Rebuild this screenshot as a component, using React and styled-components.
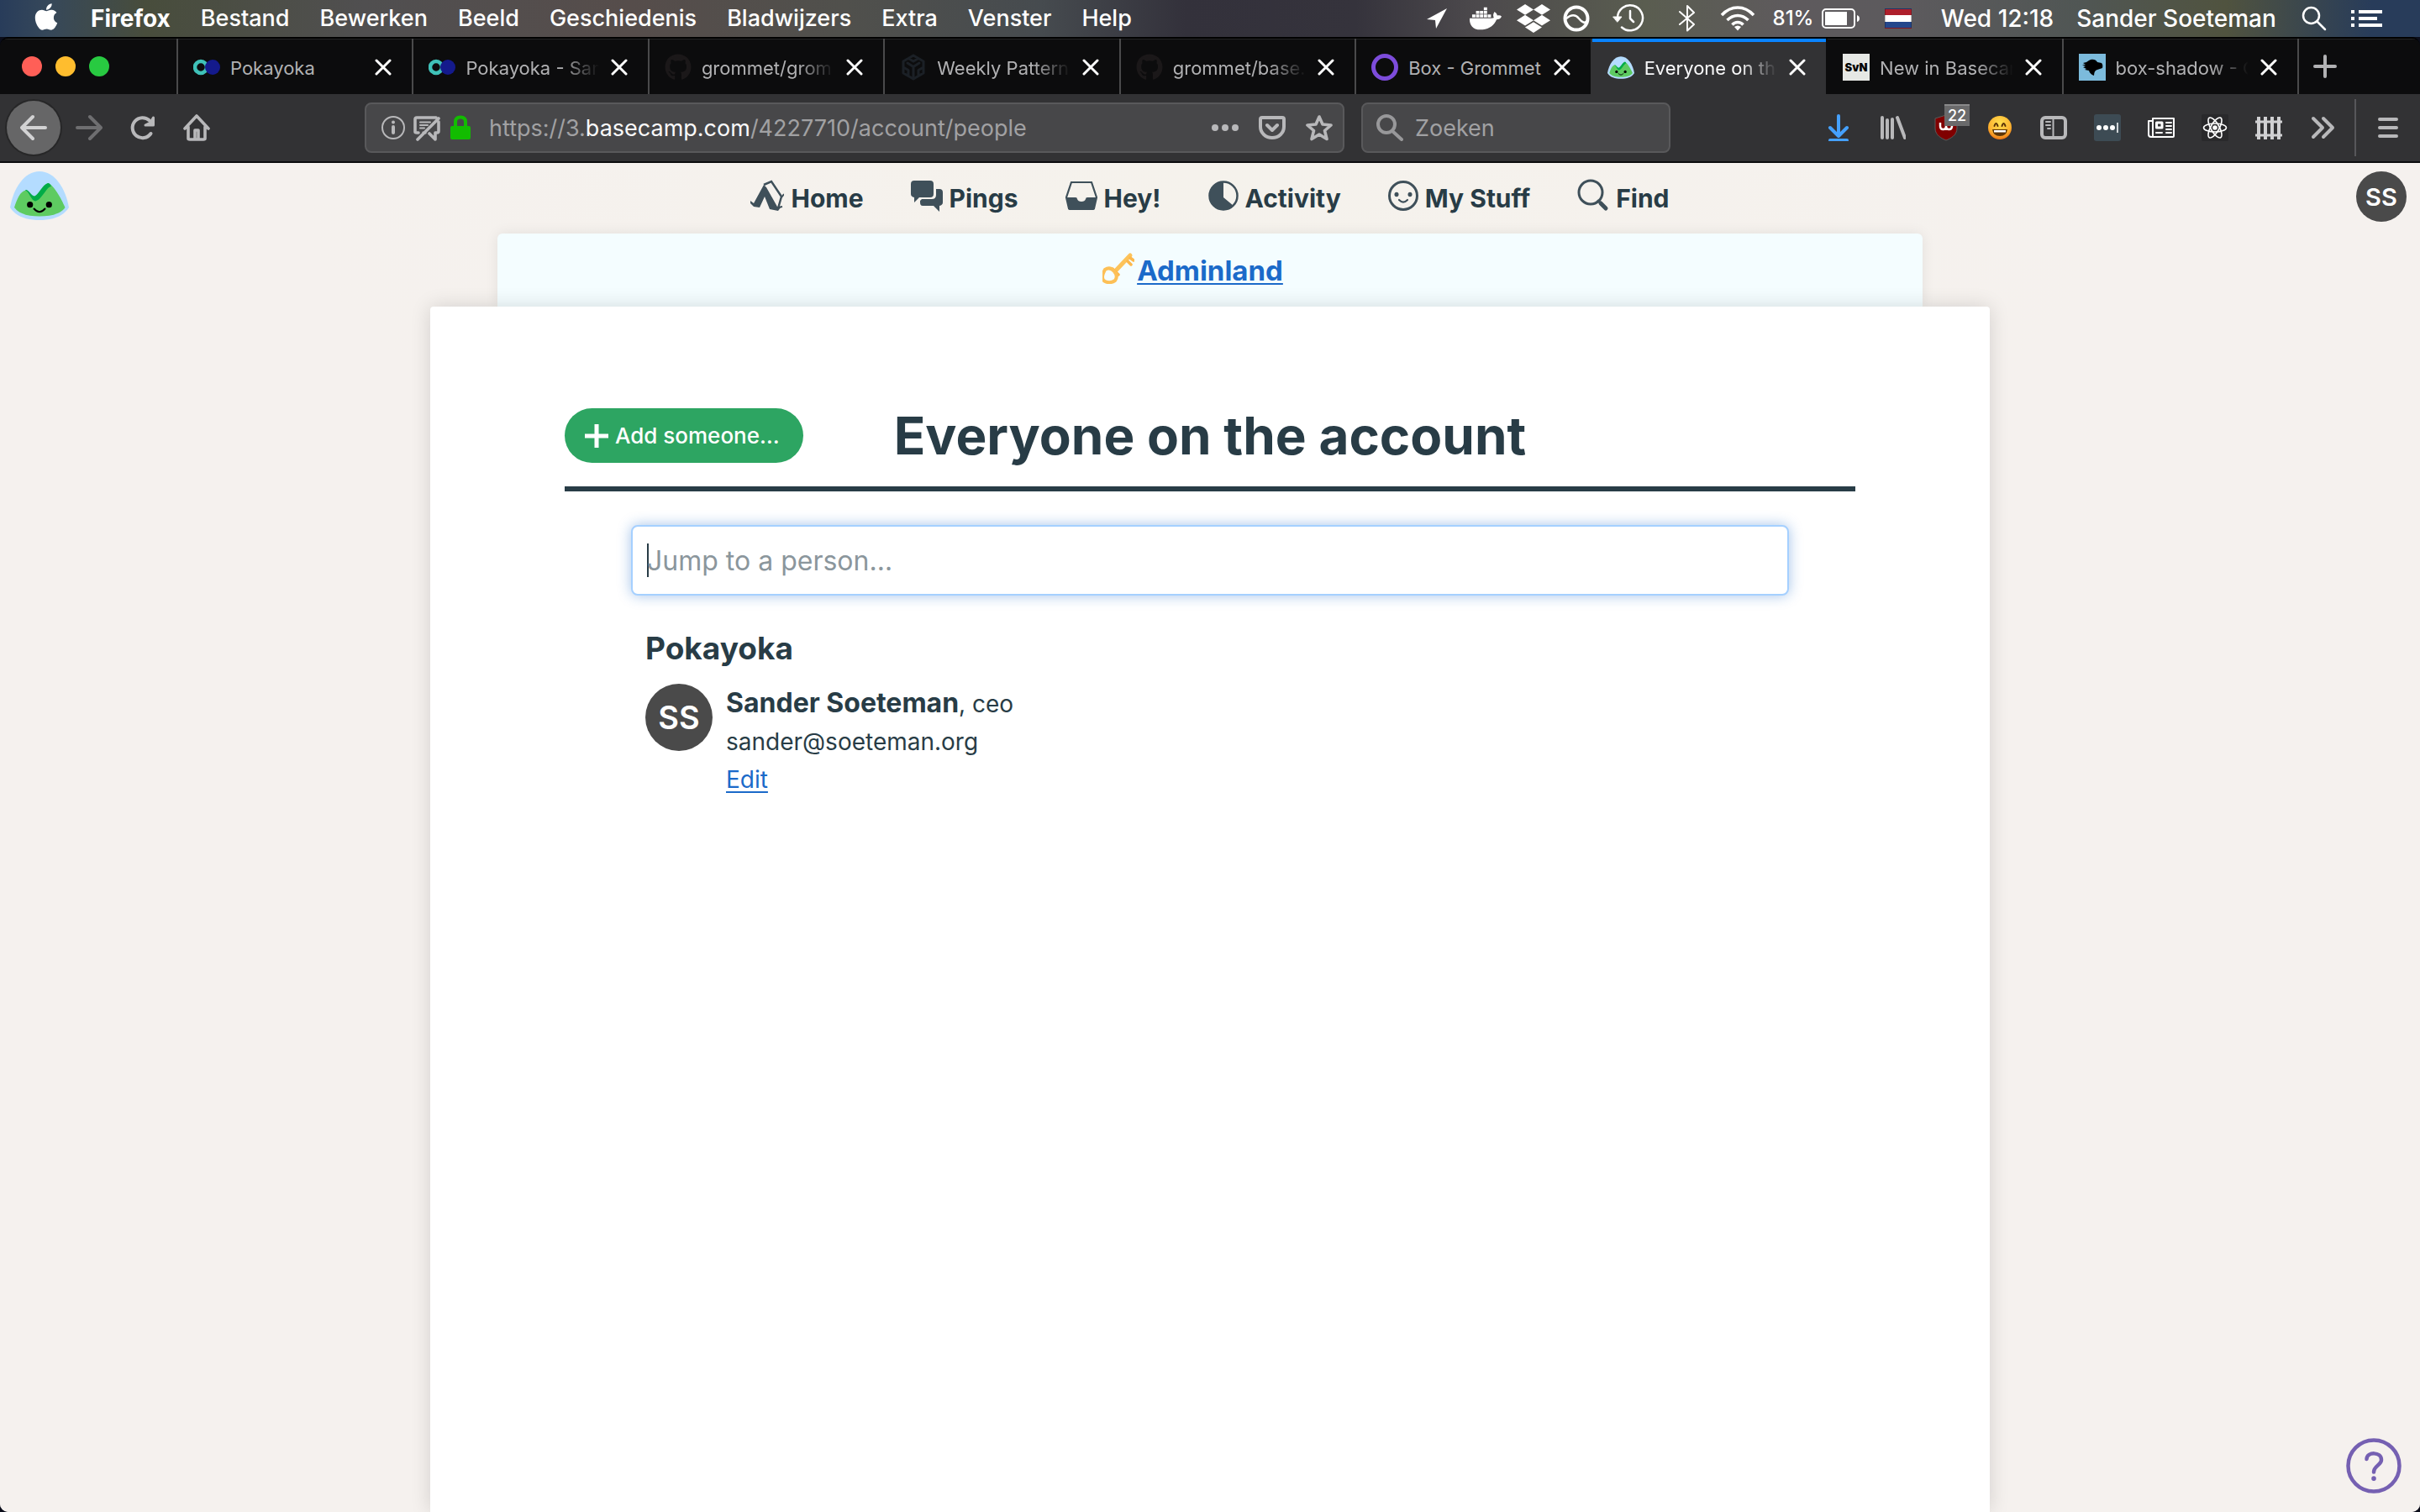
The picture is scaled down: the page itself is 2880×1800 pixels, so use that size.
import React from "react";
import styled, { createGlobalStyle, css } from "styled-components";
import { FaApple, FaDocker, FaDropbox, FaGithub } from "react-icons/fa";

const ink = "#283c46";
const link = "#1b6ac9";
const sans = '"Inter", "Liberation Sans", sans-serif';

const GlobalStyle = createGlobalStyle`
  *, *::before, *::after { box-sizing: border-box; }
  body { margin: 0; background: #0b0d1a; font-family: ${sans}; }
  button, input { font: inherit; color: inherit; }
  button { border: 0; padding: 0; background: none; cursor: pointer; }
  svg { display: block; flex: none; }
`;

const Screen = styled.div`
  min-height: 100vh;
  display: flex;
  flex-direction: column;
  background: #0b0d1a;
`;

/* ---------- system menu bar ---------- */

const MenuBar = styled.header`
  height: 44px;
  display: flex;
  align-items: center;
  justify-content: space-between;
  color: #fff;
  font-size: 28px;
  line-height: 44px;
  font-weight: 500;
  white-space: nowrap;
  background: linear-gradient(
    90deg, #283c5a 0%, #36485a 2%, #484d3c 6%, #504f50 15%, #564d4b 26%,
    #50504c 35%, #464b4f 43%, #33313b 49%, #35333c 56%, #4c494c 61%,
    #5a5d50 68%, #5e5a5d 74%, #5c5a5d 79%, #505654 86%, #50533f 92%, #283c5a 98%
  );
`;

const MenuGroup = styled.nav`
  display: flex;
  align-items: center;
  padding-left: 36px;
`;

const MenuButton = styled.button`
  padding: 0 18px;
  font-size: ${(p) => (p.$strong ? 28 : 27)}px;
  font-weight: ${(p) => (p.$strong ? 700 : 500)};
`;

const AppleButton = styled.button`
  width: 54px;
  height: 44px;
  padding-bottom: 4px;
  display: flex;
  align-items: center;
  padding-left: 1px;
`;

const StatusGroup = styled.div`
  display: flex;
  align-items: center;
  padding-right: 36px;
`;

const StatusItem = styled.button`
  width: ${(p) => p.$w}px;
  height: 44px;
  display: flex;
  align-items: center;
  justify-content: center;
  gap: 10px;
`;

const Percent = styled.span`
  font-size: 24px;
`;

const Flag = styled.span`
  width: 32px;
  height: 24px;
  border: 1px solid rgba(0, 0, 0, 0.25);
  background: linear-gradient(#ae1f2b 33%, #fff 33% 67%, #24478c 67%);
`;

/* ---------- browser window ---------- */

const BrowserWindow = styled.div`
  flex: 1;
  display: flex;
  flex-direction: column;
  border-top: 2px solid #000;
  border-radius: 10px;
  overflow: hidden;
`;

const TabStrip = styled.div`
  height: 66px;
  display: flex;
  background: #0c0c0d;
  box-shadow: inset 0 1px #252526;
`;

const TrafficLights = styled.div`
  width: 210px;
  display: flex;
  align-items: center;
  gap: 16px;
  padding-left: 26px;
`;

const Light = styled.button`
  width: 24px;
  height: 24px;
  border-radius: 50%;
  background: ${(p) => p.$color};
`;

const Tab = styled.div`
  flex: 1 1 0;
  min-width: 0;
  display: flex;
  align-items: center;
  gap: 12px;
  padding: 2px 22px 0 18px;
  border-left: 2px solid #4a4a4b;
  color: #b1b1b3;
  font-size: 22px;
  line-height: 32px;
  ${(p) =>
    p.$active &&
    css`
      background: #323234;
      color: #f9f9fa;
      border-left-color: #323234;
      box-shadow: inset 0 4px #0a84ff;
    `}
  ${(p) => p.$afterActive && css`border-left-color: #0c0c0d;`}
`;

const TabTitle = styled.span`
  flex: 1;
  min-width: 0;
  padding-top: 2px;
  overflow: hidden;
  white-space: nowrap;
  ${(p) =>
    p.$fade &&
    css`
      mask-image: linear-gradient(90deg, #000 calc(100% - 44px), transparent);
    `}
`;

const TabClose = styled.button`
  width: 24px;
  height: 32px;
  display: flex;
  align-items: center;
  justify-content: center;
  color: #fff;
`;

const NewTab = styled.button`
  width: 146px;
  padding-left: 17px;
  border-left: 2px solid #4a4a4b;
  color: #b1b1b3;
`;

const BadgeIcon = styled.span`
  width: 32px;
  height: 32px;
  display: flex;
  align-items: center;
  justify-content: center;
  background: #e6e8e5;
  color: #000;
  font-size: 13px;
  font-weight: 900;
`;

const Toolbar = styled.div`
  height: 82px;
  display: flex;
  align-items: center;
  padding: 0 6px 0 8px;
  background: #323234;
  border-bottom: 2px solid #0c0c0d;
  color: #b8b8ba;
`;

const ToolButton = styled.button`
  position: relative;
  width: 64px;
  height: 64px;
  display: flex;
  align-items: center;
  justify-content: center;
`;

const BackButton = styled(ToolButton)`
  margin-right: 2px;
  border-radius: 50%;
  background: #666667;
  color: #d2d2d3;
  box-shadow: 0 0 0 2px #272728;
`;

const Spacer = styled.div`
  flex: 0 1 168px;
`;

const fieldBox = css`
  height: 60px;
  display: flex;
  align-items: center;
  border: 2px solid #59595b;
  border-radius: 8px;
  background: #474749;
  font-size: 27px;
  line-height: 40px;
`;

const UrlBar = styled.div`
  ${fieldBox}
  flex: 1;
  min-width: 0;
  gap: 8px;
  padding: 0 12px 0 16px;
`;

const Url = styled.div`
  flex: 1;
  min-width: 0;
  padding: 2px 0 0 10px;
  overflow: hidden;
  white-space: nowrap;
  color: #a1a1a3;
  outline: 0;
`;

const UrlDomain = styled.span`
  color: #f9f9fa;
`;

const UrlActions = styled.div`
  display: flex;
  gap: 24px;
`;

const SearchBar = styled.label`
  ${fieldBox}
  width: 368px;
  margin-left: 20px;
  padding: 0 16px;
  gap: 14px;
  color: #98989a;
`;

const SearchInput = styled.input`
  flex: 1;
  min-width: 0;
  padding: 2px 0 0;
  border: 0;
  outline: 0;
  background: none;
  &::placeholder { color: #a1a1a3; opacity: 1; }
`;

const CountBadge = styled.span`
  position: absolute;
  top: 4px;
  right: 4px;
  width: 30px;
  height: 26px;
  border-top: 2px solid #8a8a8b;
  background: #6a6a6b;
  color: #fff;
  font-size: 18px;
  line-height: 24px;
  font-weight: 500;
`;

const ToolbarDivider = styled.span`
  width: 2px;
  height: 68px;
  margin: 0 6px;
  background: #57575a;
`;

/* ---------- web page ---------- */

const Page = styled.div`
  position: relative;
  flex: 1;
  display: flex;
  flex-direction: column;
  color: ${ink};
  background: radial-gradient(ellipse 1100px 500px at 50% 0, #f5f2ec, #f5f1ee) #f5f1ee;
`;

const TopBar = styled.header`
  height: 84px;
  display: flex;
  justify-content: space-between;
  align-items: flex-start;
  padding: 10px 16px 0 12px;
`;

const HomeLogo = styled.a`
  width: 80px;
`;

const TopNav = styled.nav`
  display: flex;
  gap: 56px;
  height: 64px;
  align-items: center;
`;

const NavLink = styled.a`
  display: flex;
  align-items: center;
  gap: 8px;
  color: ${ink};
  font-size: 30px;
  line-height: 40px;
  font-weight: 700;
  text-decoration: none;
  white-space: nowrap;
  svg { color: #3f505a; margin-bottom: 6px; }
`;

const AvatarSlot = styled.div`
  width: 76px;
  display: flex;
  justify-content: flex-end;
`;

const Avatar = styled.span`
  flex: none;
  width: ${(p) => p.$size}px;
  height: ${(p) => p.$size}px;
  display: flex;
  align-items: center;
  justify-content: center;
  border-radius: 50%;
  background: #4a4a4a;
  color: #fff;
  font-size: ${(p) => (p.$size > 60 ? 38 : 29)}px;
  font-weight: 600;
`;

const Breadcrumb = styled.div`
  width: calc(100% - 1184px);
  min-width: 600px;
  max-width: 1696px;
  height: 87px;
  margin: 0 auto;
  display: flex;
  align-items: center;
  justify-content: center;
  border-radius: 6px 6px 0 0;
  background: #f4fdff;
  box-shadow: 0 0 16px rgba(0, 0, 0, 0.08);
`;

const AdminLink = styled.a`
  position: relative;
  color: ${link};
  font-size: 33px;
  line-height: 44px;
  font-weight: 700;
  text-decoration: underline;
  text-decoration-thickness: 2px;
  text-underline-offset: 3px;
  text-decoration-skip-ink: none;
`;

const KeySlot = styled.span`
  position: absolute;
  right: 100%;
  top: 0;
  padding-right: 3px;
`;

const Sheet = styled.main`
  position: relative;
  flex: 1;
  width: calc(100% - 1024px);
  min-width: 900px;
  max-width: 1856px;
  margin: 0 auto;
  padding: 107px 160px 60px;
  border-radius: 4px 4px 0 0;
  background: #fff;
  box-shadow: 0 0 24px rgba(0, 0, 0, 0.14);
`;

const SheetHeader = styled.div`
  display: grid;
  grid-template-columns: 1fr auto 1fr;
  align-items: center;
  padding: 14px 0 28px;
  border-bottom: 6px solid ${ink};
`;

const AddButton = styled.button`
  justify-self: start;
  height: 65px;
  display: flex;
  align-items: center;
  gap: 8px;
  padding: 0 28px 0 24px;
  border-radius: 33px;
  background: #2da562;
  color: #fff;
  font-size: 26px;
  font-weight: 500;
  white-space: nowrap;
`;

const Title = styled.h1`
  margin: 0;
  font-size: 62px;
  line-height: 64px;
  font-weight: 700;
  white-space: nowrap;
`;

const Directory = styled.section`
  padding: 40px 79px 0;
`;

const JumpInput = styled.input`
  display: block;
  width: 100%;
  height: 84px;
  padding: 0 17px;
  border: 2px solid #a5d0ff;
  border-radius: 8px;
  outline: 0;
  font-size: 32px;
  background: linear-gradient(${ink}, ${ink}) 17px 50% / 2px 40px no-repeat #fff;
  box-shadow: 0 0 16px rgba(27, 106, 201, 0.4);
  &::placeholder { color: #8b969c; opacity: 1; }
`;

const Company = styled.div`
  padding: 37px 17px 0;
`;

const CompanyName = styled.h2`
  margin: 0;
  font-size: 37px;
  line-height: 52px;
  font-weight: 700;
`;

const Person = styled.div`
  display: flex;
  align-items: flex-start;
  gap: 16px;
  padding-top: 16px;
`;

const PersonDetails = styled.div`
  display: flex;
  flex-direction: column;
  align-items: flex-start;
  font-size: 28px;
  line-height: 45px;
`;

const PersonName = styled.strong`
  font-size: 32px;
  font-weight: 700;
`;

const EditLink = styled.a`
  color: ${link};
  text-decoration: underline;
  text-underline-offset: 4px;
`;

const HelpButton = styled.button`
  position: fixed;
  right: 22px;
  bottom: 22px;
  color: #7560b2;
`;

/* ---------- drawings ---------- */

const Stroke = ({ w = 32, h = 32, box, sw = 4, children, ...rest }) => (
  <svg width={w} height={h} viewBox={box || `0 0 ${w} ${h}`} fill="none" stroke="currentColor"
    strokeWidth={sw} strokeLinecap="round" strokeLinejoin="round" aria-hidden="true" {...rest}>
    {children}
  </svg>
);

const CampLogo = ({ width = 70 }) => (
  <svg width={width} height={Math.round((width * 58) / 70)} viewBox="0 0 70 58" aria-hidden="true">
    <path d="M35 0C53 0 66 20 70 43 63 54 50 58 35 58S7 54 0 43C4 20 17 0 35 0Z" fill="#b4dcff" />
    <path d="M5 43C8 34 12 23 19 22.500 24 23 26 31 30 34 35 32 39 16 45 14 51 15 61 32 65.500 43 60 51 48 53.500 35 53.500S11 51 5 43Z" fill="#5ecb61" />
    <path d="M18 22.500C21 20 25 29.500 29 29.500 34 28 38 16 45 14 47 13.500 48 16 49 18 44 17 38 34 30 35.500 25 35 23 24 18 22.500Z" fill="#00ac47" />
    <circle cx="23.700" cy="39.700" r="3.600" />
    <circle cx="46.300" cy="39.700" r="3.600" />
    <path d="M28.500 44.500Q35 52 41.500 44.500" fill="none" stroke="#000" strokeWidth="2" strokeLinecap="round" />
  </svg>
);

const LinkedRings = () => (
  <svg width="32" height="32" viewBox="0 0 32 32" aria-hidden="true">
    <circle cx="9" cy="16" r="7" fill="none" stroke="#3fc1b8" strokeWidth="4.500" />
    <circle cx="23" cy="16" r="9" fill="#141a8c" />
  </svg>
);

const CodeCube = () => (
  <Stroke sw={3} color="#1b2026">
    <path d="M16 2 28 9V23L16 30 4 23V9ZM9 11 16 15.500 23 11M16 16V30M10 5.500 16 9 22 5.500M4 16 10 19.500V26M28 16 22 19.500V26" />
  </Stroke>
);

const GrommetRing = () => (
  <svg width="32" height="32" viewBox="0 0 32 32" fill="none" aria-hidden="true">
    <circle cx="16" cy="16" r="13.500" stroke="#7d4cdb" strokeWidth="5" />
  </svg>
);

const DinoMark = () => (
  <svg width="32" height="32" viewBox="0 0 32 32" aria-hidden="true">
    <path fill="#7cbbdc" d="M0 0h32v32H0z" />
    <path d="M5 11 9 10 12 8C15 6 20 6 22 10L27 11Q29 13 28 17L22 19Q18 20 18 26Q13 24 12 20L7 19 9 18 5 16 8 15 4 13 8 13Z" />
  </svg>
);

const Cross = () => (
  <Stroke w={20} h={20} sw={3}><path d="M2 2 18 18M18 2 2 18" /></Stroke>
);

const Magnifier = () => (
  <Stroke><circle cx="12" cy="12" r="10" /><path d="M19 20 30 30" /></Stroke>
);

const statusIcons = {
  location: <svg width="24" height="24" viewBox="0 0 24 24"><path fill="currentColor" d="M24 0 11 24 10 14 0 13Z" /></svg>,
  docker: <FaDocker size={38} />,
  dropbox: <FaDropbox size={40} />,
  orbit: <Stroke sw={4}><circle cx="16" cy="16" r="13.500" /><path strokeWidth="2.500" d="M4 16C10 11 15 11 19 16S26 22 29 19" /></Stroke>,
  clock: (
    <Stroke w={38} h={34} sw={2.5}>
      <path d="M6 16A15 15 0 1 1 11 27.500M21 8V17L25 21" />
      <path d="M1 15H11L6 21Z" fill="currentColor" strokeWidth="1" />
    </Stroke>
  ),
  bluetooth: <Stroke w={20} h={34} sw={2}><path d="M1 9 18 24 10 31.500V2L18 10 1 24" /></Stroke>,
  wifi: (
    <svg width="42" height="30" viewBox="0 0 42 30" fill="none" stroke="currentColor" strokeWidth="3.500">
      <path d="M2 11C13-1 29-1 40 11M8.500 17C16 9.500 26 9.500 33.500 17M14.500 22.500C18 18.500 24 18.500 27.500 22.500" />
      <path d="M17 25Q21 22 25 25L21 29.500Z" fill="currentColor" stroke="none" />
    </svg>
  ),
  battery: (
    <svg width="46" height="24" viewBox="0 0 46 24" fill="none" stroke="currentColor">
      <rect x="1" y="1" width="38" height="22" rx="4" strokeWidth="2" />
      <path d="M4 4H30V20H4ZM42 8Q45 9 45 12T42 16Z" fill="currentColor" stroke="none" />
    </svg>
  ),
  search: <Stroke w={30} h={30} sw={2.5}><circle cx="11.500" cy="11.500" r="9.500" /><path d="M18.500 18.500 28 28" /></Stroke>,
  list: (
    <svg width="38" height="20" viewBox="0 0 38 20" fill="currentColor">
      <path d="M0 0H4V4H0ZM9 0H37V4H9ZM0 8H4V12H0ZM9 8H31V12H9ZM0 16H4V20H0ZM9 16H37V20H9Z" />
    </svg>
  ),
};

const ArrowLeft = () => <Stroke><path d="M2 16H30M15 3 2 16 15 29" /></Stroke>;
const ArrowRight = () => <Stroke color="#6e6e70"><path d="M2 16H30M17 3 30 16 17 29" /></Stroke>;
const Reload = () => (
  <Stroke><path d="M25.500 23A12 12 0 1 1 24 7.500" /><path d="M28.500 4V13H19L25 10Z" fill="currentColor" strokeWidth="3" /></Stroke>
);
const House = () => (
  <Stroke sw={3.6}><path d="M2 17 16 2 30 17M6 15V29Q6 30 8 30H24Q26 30 26 29V15M14 29V19H18V29" /></Stroke>
);

const tools = [
  { name: "Downloads", art: <Stroke color="#45a1ff"><path d="M16 2V25M6 16 16 26 26 16M6 31H26" /></Stroke> },
  { name: "Library", art: <Stroke><path d="M4 4V28M10 7V28M16 6V28M22 4 31 28" /></Stroke> },
  {
    name: "Content blocker",
    count: "22",
    art: (
      <svg width="30" height="32" viewBox="0 0 30 32">
        <path d="M15 1 28 5V17C28 25 20 29 15 31 10 29 2 25 2 17V5Z" fill="#800000" stroke="#5b5b5b" />
        <path d="M8 10V14Q8 18 11.500 18T15 14V11M15 14Q15 18 18.500 18T22 14V10" fill="none" stroke="#fff" strokeWidth="2.500" />
      </svg>
    ),
  },
  {
    name: "Emoji",
    art: (
      <svg width="30" height="30" viewBox="0 0 30 30">
        <defs>
          <radialGradient id="face" cx="50%" cy="30%" r="75%">
            <stop offset="0" stopColor="#ffe04f" /><stop offset="0.650" stopColor="#fdb22f" /><stop offset="1" stopColor="#e8660e" />
          </radialGradient>
        </defs>
        <circle cx="15" cy="15" r="14" fill="url(#face)" />
        <path d="M8.500 13Q10.500 7 12.500 13M17.500 13Q19.500 7 21.500 13" fill="none" stroke="#5c3408" strokeWidth="2" strokeLinecap="round" />
        <path d="M6 17H24Q23 25 15 25T6 17Z" fill="#5c3408" /><path d="M8 18H22V20.500H8Z" fill="#fff" />
      </svg>
    ),
  },
  { name: "Sidebar", art: <Stroke><rect x="2" y="4" width="28" height="24" rx="4" /><path strokeWidth="2" d="M15.500 5V27M7 9H12M7 13H12M9 17H12" /></Stroke> },
  {
    name: "Passwords",
    art: (
      <svg width="32" height="32" viewBox="0 0 32 32">
        <rect width="32" height="32" rx="3" fill="#3d4b54" />
        <circle cx="6" cy="16" r="3" fill="#fff" /><circle cx="14" cy="16" r="3" fill="#fff" /><circle cx="22" cy="16" r="3" fill="#fff" />
        <path d="M28 10V22" stroke="#cfd4d7" strokeWidth="2" />
      </svg>
    ),
  },
  { name: "Reader", art: <Stroke h={24} sw={2} color="#fff"><path d="M6 1H31V22Q31 23 30 23H4Q1 23 1 20V4H5M6 1V23" /><path strokeWidth="3" d="M10.500 6H17V12H10.500Z" /><path d="M22 6H28M22 10H28M22 14H28M10 18H17M22 18H28" /></Stroke> },
  {
    name: "React Developer Tools",
    art: (
      <svg width="32" height="32" viewBox="0 0 32 32" fill="none" stroke="#fff" strokeWidth="1.600">
        <rect width="32" height="32" rx="2" fill="#29292b" stroke="none" />
        <ellipse cx="16" cy="16" rx="13.500" ry="5" /><ellipse cx="16" cy="16" rx="13.500" ry="5" transform="rotate(60 16 16)" />
        <ellipse cx="16" cy="16" rx="13.500" ry="5" transform="rotate(120 16 16)" /><circle cx="16" cy="16" r="2" fill="#fff" />
      </svg>
    ),
  },
  { name: "Fence", art: <Stroke color="#d0d0d2" strokeLinecap="butt"><path d="M4 3V30M12 3V30M20 3V30M28 3V30" /><path strokeWidth="3" d="M0 9H32M0 25H32" /></Stroke> },
  { name: "More tools", art: <Stroke><path d="M5 5 16 16 5 27M17 5 28 16 17 27" /></Stroke> },
];

const navItems = [
  {
    label: "Home",
    art: (
      <svg width="40" height="38" viewBox="0 0 40 38" fill="none">
        <path d="M16 6 25 2 37 20 33 34" stroke="currentColor" strokeWidth="2.500" />
        <path d="M16 6 19 9 32 32 36 33 33 37 23 35 17 20 11 33 4 32 0 28V25L4 28Z" fill="currentColor" />
        <path d="M40 17 37 21M33 33 38 32" stroke="currentColor" strokeWidth="2" />
      </svg>
    ),
  },
  {
    label: "Pings",
    art: (
      <svg width="38" height="38" viewBox="0 0 38 38" fill="currentColor">
        <path d="M4 1H23Q27 1 27 5V17Q27 21 23 21H10L4 27V21Q0 20 0 17V5Q0 1 4 1Z" />
        <path d="M30 11H34Q38 11 38 15V27Q38 30 34 31V38L27 31H14Q11 31 11 27V25L13 23H25Q30 23 30 18Z" />
      </svg>
    ),
  },
  {
    label: "Hey!",
    art: (
      <svg width="38" height="36" viewBox="0 0 38 36" fill="none">
        <path d="M7 2H31L37 20 34 33Q34 34 32 34H6Q4 34 4 33L1 20Z" stroke="currentColor" strokeWidth="2.200" />
        <path d="M1 20H12Q14 20 14 22 15 25 19 25T24 22Q24 20 26 20H37L34 34H4Z" fill="currentColor" />
      </svg>
    ),
  },
  {
    label: "Activity",
    art: (
      <svg width="36" height="36" viewBox="0 0 36 36" fill="none">
        <circle cx="18" cy="18" r="16.500" stroke="currentColor" strokeWidth="2.500" />
        <path d="M18 1V20L30 30A17 17 0 1 1 18 1Z" fill="currentColor" />
      </svg>
    ),
  },
  {
    label: "My Stuff",
    art: (
      <svg width="36" height="36" viewBox="0 0 36 36" fill="none" stroke="currentColor" strokeWidth="3">
        <circle cx="18" cy="18" r="16.500" />
        <path d="M13 23Q18 28 23 23" strokeWidth="2.200" strokeLinecap="round" />
        <ellipse cx="10" cy="16.500" rx="2.500" ry="2.700" fill="currentColor" stroke="none" />
        <ellipse cx="26" cy="16.500" rx="2.500" ry="2.700" fill="currentColor" stroke="none" />
      </svg>
    ),
  },
  {
    label: "Find",
    art: (
      <svg width="38" height="40" viewBox="0 0 38 40" fill="none" stroke="currentColor" strokeLinecap="round">
        <circle cx="16" cy="16" r="14" strokeWidth="3" /><path d="M25 26 27 28" strokeWidth="3" /><path d="M28 29 34 35" strokeWidth="5" />
      </svg>
    ),
  },
];

const KeyIcon = () => (
  <svg width="38" height="38" viewBox="0 0 38 38" fill="none" aria-hidden="true">
    <path d="M15 23 33 4" stroke="#fdc35a" strokeWidth="5" strokeLinecap="round" />
    <path d="M30 11 34 15M33 7 37 10M12 20 19 27" stroke="#fdb84c" strokeWidth="3.500" strokeLinecap="round" />
    <path d="M3 21Q9 17 14 23T15 34Q9 38 3 35T3 21Z" stroke="#fdc057" strokeWidth="4" />
  </svg>
);

const tabs = [
  { title: "Pokayoka", icon: <LinkedRings /> },
  { title: "Pokayoka - San", icon: <LinkedRings />, fade: true },
  { title: "grommet/grom", icon: <FaGithub size={32} color="#1b1819" />, fade: true },
  { title: "Weekly Pattern", icon: <CodeCube />, fade: true },
  { title: "grommet/base.j", icon: <FaGithub size={32} color="#1b1819" />, fade: true },
  { title: "Box - Grommet", icon: <GrommetRing /> },
  { title: "Everyone on the", icon: <CampLogo width={32} />, fade: true, active: true },
  { title: "New in Basecam", icon: <BadgeIcon>SvN</BadgeIcon>, fade: true, afterActive: true },
  { title: "box-shadow - C", icon: <DinoMark />, fade: true },
];

const menus = ["Firefox", "Bestand", "Bewerken", "Beeld", "Geschiedenis", "Bladwijzers", "Extra", "Venster", "Help"];

export default function App() {
  return (
    <Screen>
      <GlobalStyle />
      <MenuBar>
        <MenuGroup>
          <AppleButton aria-label="Apple"><FaApple size={36} /></AppleButton>
          {menus.map((m, i) => <MenuButton key={m} $strong={i === 0}>{m}</MenuButton>)}
        </MenuGroup>
        <StatusGroup>
          <StatusItem $w={60} aria-label="Location">{statusIcons.location}</StatusItem>
          <StatusItem $w={56} aria-label="Docker">{statusIcons.docker}</StatusItem>
          <StatusItem $w={58} aria-label="Dropbox">{statusIcons.dropbox}</StatusItem>
          <StatusItem $w={44} aria-label="Orbit">{statusIcons.orbit}</StatusItem>
          <StatusItem $w={80} aria-label="Backups">{statusIcons.clock}</StatusItem>
          <StatusItem $w={60} aria-label="Bluetooth">{statusIcons.bluetooth}</StatusItem>
          <StatusItem $w={60} aria-label="Wi-Fi">{statusIcons.wifi}</StatusItem>
          <StatusItem $w={128}><Percent>81%</Percent>{statusIcons.battery}</StatusItem>
          <StatusItem $w={66} aria-label="Input language"><Flag /></StatusItem>
          <StatusItem $w={170}>Wed 12:18</StatusItem>
          <StatusItem $w={256}>Sander Soeteman</StatusItem>
          <StatusItem $w={72} aria-label="Search">{statusIcons.search}</StatusItem>
          <StatusItem $w={54} aria-label="Notifications">{statusIcons.list}</StatusItem>
        </StatusGroup>
      </MenuBar>

      <BrowserWindow>
        <TabStrip>
          <TrafficLights>
            <Light $color="#ff5f57" aria-label="Close window" />
            <Light $color="#ffbd2e" aria-label="Minimise window" />
            <Light $color="#28ca41" aria-label="Zoom window" />
          </TrafficLights>
          {tabs.map((t) => (
            <Tab key={t.title} $active={t.active} $afterActive={t.afterActive}>
              {t.icon}
              <TabTitle $fade={t.fade}>{t.title}</TabTitle>
              <TabClose aria-label="Close tab"><Cross /></TabClose>
            </Tab>
          ))}
          <NewTab aria-label="New tab"><Stroke w={28} h={28}><path d="M14 2V26M2 14H26" /></Stroke></NewTab>
        </TabStrip>

        <Toolbar>
          <BackButton aria-label="Back"><ArrowLeft /></BackButton>
          <ToolButton aria-label="Forward"><ArrowRight /></ToolButton>
          <ToolButton aria-label="Reload"><Reload /></ToolButton>
          <ToolButton aria-label="Home page"><House /></ToolButton>
          <Spacer />
          <UrlBar>
            <Stroke sw={2}><circle cx="16" cy="16" r="13" /><path strokeWidth="4" d="M16 15V22M16 9.500V9.600" /></Stroke>
            <Stroke sw={3.6}>
              <path d="M27 4H4Q2 4 2 6V21Q2 22 4 22H6M12 22 L14 22M30 9V20Q30 22 28 22H26V30L19 23M5 30 30 5" />
              <path strokeWidth="2" d="M8 9.500H20M8 13H17M8 16.500H13" />
            </Stroke>
            <svg width="32" height="32" viewBox="0 0 32 32" fill="none" aria-hidden="true">
              <path d="M10 15V9Q10 3.500 16 3.500T22 9V15" stroke="#12bc00" strokeWidth="4" />
              <rect x="4" y="14" width="24" height="16" rx="2" fill="#12bc00" />
            </svg>
            <Url role="textbox" aria-label="Address" tabIndex={0}>
              https://3.<UrlDomain>basecamp.com</UrlDomain>/4227710/account/people
            </Url>
            <UrlActions>
              <button aria-label="Page actions">
                <svg width="32" height="32" viewBox="0 0 32 32" fill="currentColor"><circle cx="4" cy="16" r="4" /><circle cx="16" cy="16" r="4" /><circle cx="28" cy="16" r="4" /></svg>
              </button>
              <button aria-label="Save to Pocket"><Stroke><path d="M4 4H28Q30 4 30 6V15A14 13 0 0 1 2 15V6Q2 4 4 4ZM10 13 16 19 22 13" /></Stroke></button>
              <button aria-label="Bookmark"><Stroke sw={3.6}><path d="M16 3 20 12 30 13 22.500 19.500 25 29.500 16 24 7 29.500 9.500 19.500 2 13 12 12Z" /></Stroke></button>
            </UrlActions>
          </UrlBar>
          <SearchBar>
            <Magnifier />
            <SearchInput type="text" placeholder="Zoeken" aria-label="Zoeken" />
          </SearchBar>
          <Spacer />
          {tools.map((t) => (
            <ToolButton key={t.name} aria-label={t.name}>
              {t.art}
              {t.count && <CountBadge>{t.count}</CountBadge>}
            </ToolButton>
          ))}
          <ToolbarDivider />
          <ToolButton aria-label="Menu"><Stroke><path d="M6 6H26M6 16H26M6 26H26" /></Stroke></ToolButton>
        </Toolbar>

        <Page>
          <TopBar>
            <HomeLogo href="#home" aria-label="Basecamp"><CampLogo /></HomeLogo>
            <TopNav>
              {navItems.map((n) => <NavLink key={n.label} href="#nav">{n.art}{n.label}</NavLink>)}
            </TopNav>
            <AvatarSlot><Avatar $size={60}>SS</Avatar></AvatarSlot>
          </TopBar>

          <Breadcrumb>
            <AdminLink href="#admin"><KeySlot><KeyIcon /></KeySlot>Adminland</AdminLink>
          </Breadcrumb>

          <Sheet>
            <SheetHeader>
              <AddButton>
                <svg width="28" height="28" viewBox="0 0 28 28" stroke="currentColor" strokeWidth="5"><path d="M14 0V28M0 14H28" /></svg>
                Add someone…
              </AddButton>
              <Title>Everyone on the account</Title>
            </SheetHeader>

            <Directory>
              <JumpInput type="text" placeholder="Jump to a person…" aria-label="Jump to a person…" />
              <Company>
                <CompanyName>Pokayoka</CompanyName>
                <Person>
                  <Avatar $size={80}>SS</Avatar>
                  <PersonDetails>
                    <span><PersonName>Sander Soeteman</PersonName>, ceo</span>
                    <span>sander@soeteman.org</span>
                    <EditLink href="#edit">Edit</EditLink>
                  </PersonDetails>
                </Person>
              </Company>
            </Directory>
          </Sheet>

          <HelpButton aria-label="Help">
            <Stroke w={66} h={66} sw={4.5}>
              <circle cx="33" cy="33" r="30.500" />
              <path d="M24.500 25C25 16 42 16 42 26 42 32 33 33 33 40.500" /><path strokeWidth="5.500" d="M33 48V48.200" />
            </Stroke>
          </HelpButton>
        </Page>
      </BrowserWindow>
    </Screen>
  );
}
